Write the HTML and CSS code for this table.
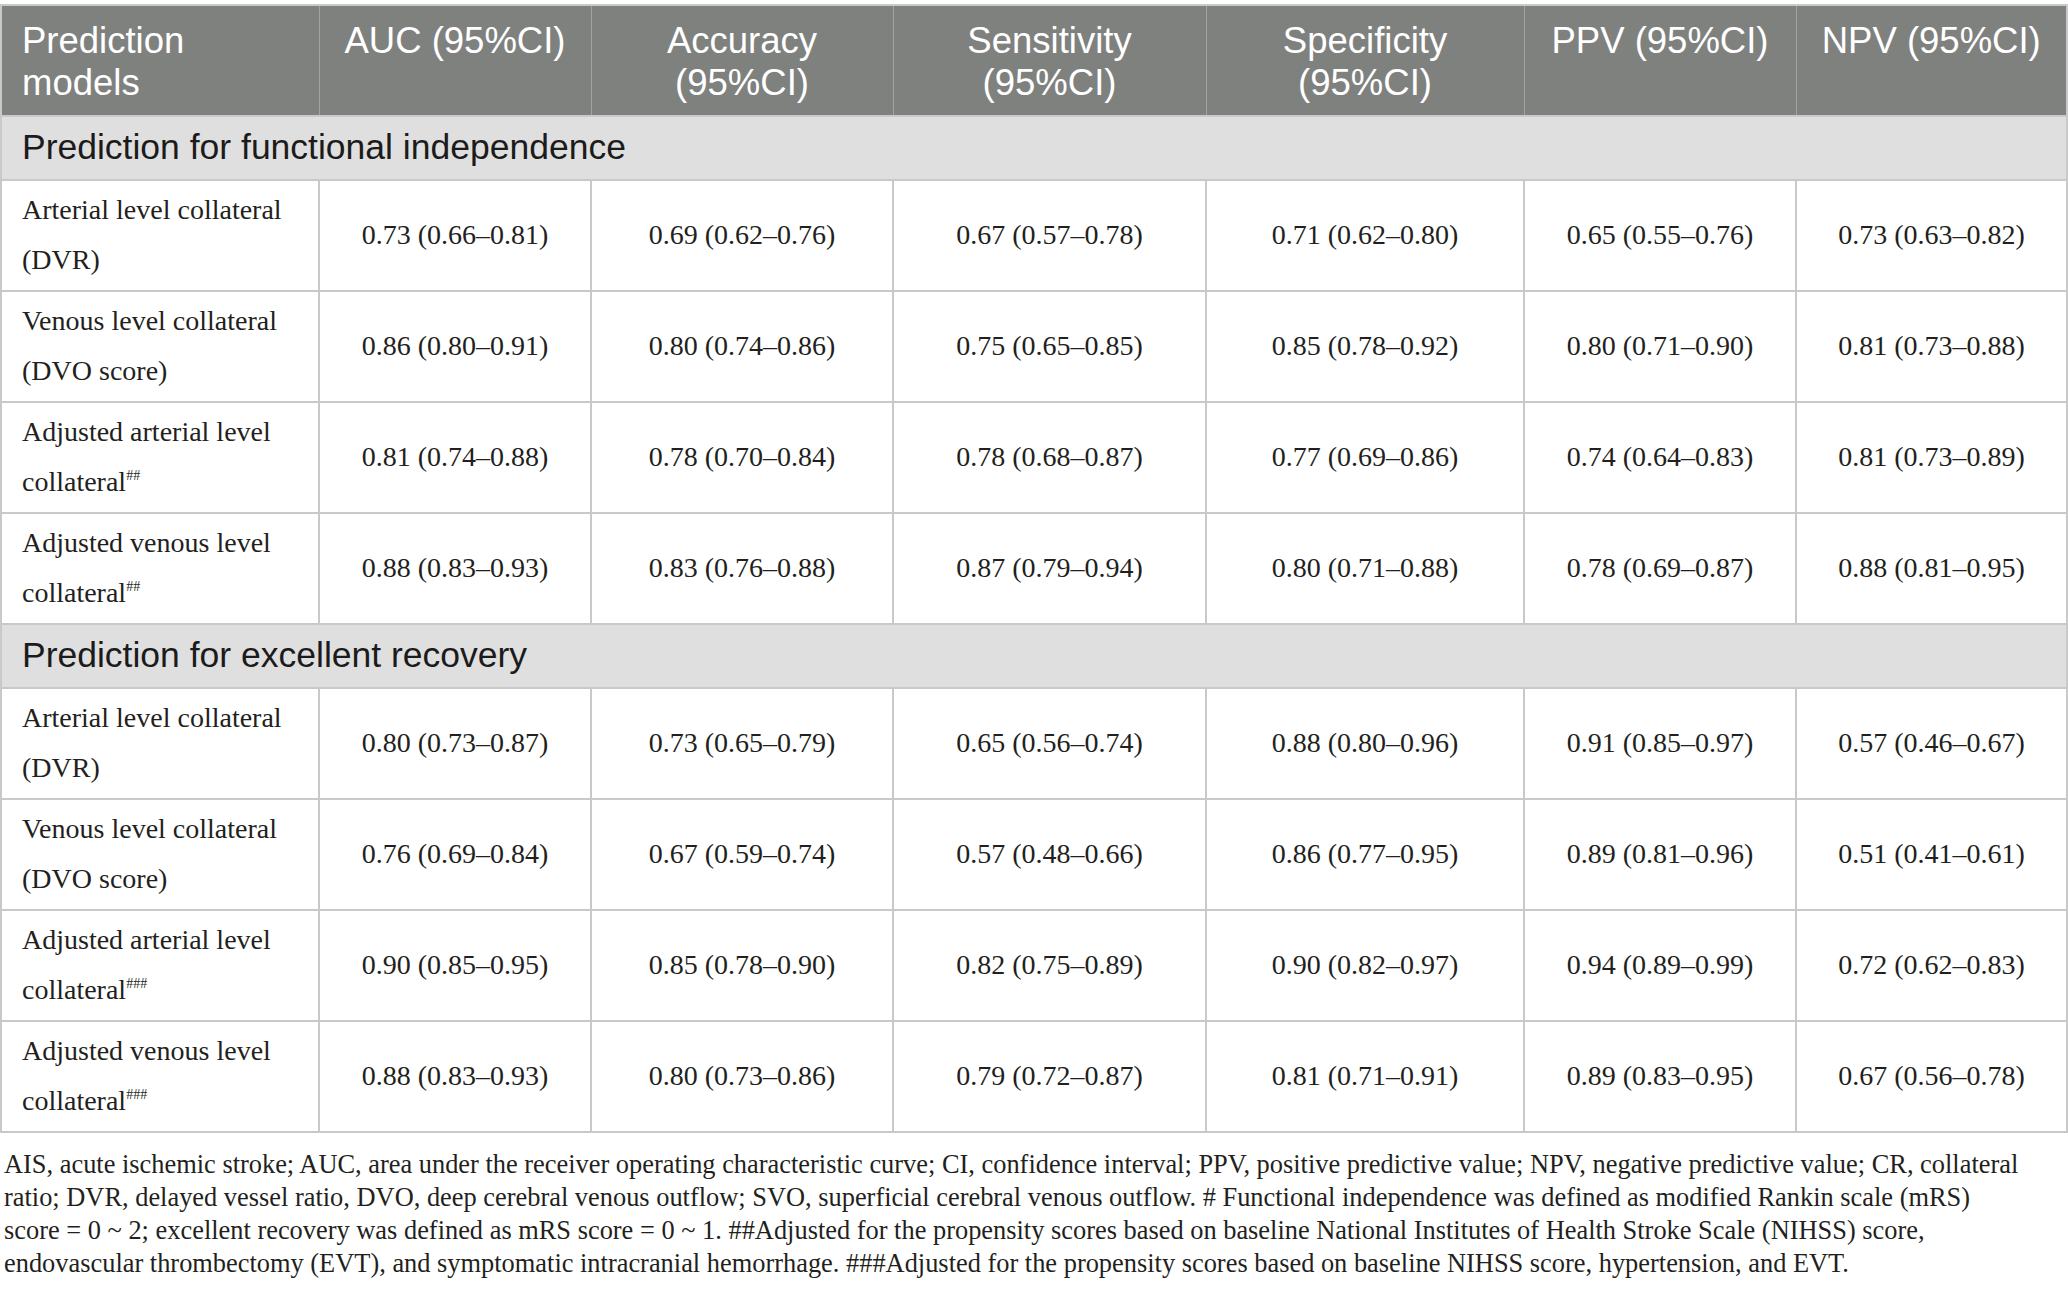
FILE: index.html
```html
<!DOCTYPE html>
<html lang="en">
<head>
<meta charset="utf-8">
<title>Prediction models</title>
<link rel="stylesheet" href="styles.css">
</head>
<body>
<div class="wrap">
<table class="tbl">
  <colgroup>
    <col class="c1"><col class="c2"><col class="c3"><col class="c4"><col class="c5"><col class="c6"><col class="c7">
  </colgroup>
  <thead>
    <tr>
      <th class="left">Prediction<br>models</th>
      <th>AUC (95%CI)</th>
      <th>Accuracy<br>(95%CI)</th>
      <th>Sensitivity<br>(95%CI)</th>
      <th>Specificity<br>(95%CI)</th>
      <th>PPV (95%CI)</th>
      <th>NPV (95%CI)</th>
    </tr>
  </thead>
  <tbody>
    <tr class="section"><td colspan="7">Prediction for functional independence</td></tr>
    <tr>
      <td class="label">Arterial level collateral<br>(DVR)</td>
      <td>0.73 (0.66–0.81)</td><td>0.69 (0.62–0.76)</td><td>0.67 (0.57–0.78)</td><td>0.71 (0.62–0.80)</td><td>0.65 (0.55–0.76)</td><td>0.73 (0.63–0.82)</td>
    </tr>
    <tr>
      <td class="label">Venous level collateral<br>(DVO score)</td>
      <td>0.86 (0.80–0.91)</td><td>0.80 (0.74–0.86)</td><td>0.75 (0.65–0.85)</td><td>0.85 (0.78–0.92)</td><td>0.80 (0.71–0.90)</td><td>0.81 (0.73–0.88)</td>
    </tr>
    <tr>
      <td class="label">Adjusted arterial level<br>collateral<sup>##</sup></td>
      <td>0.81 (0.74–0.88)</td><td>0.78 (0.70–0.84)</td><td>0.78 (0.68–0.87)</td><td>0.77 (0.69–0.86)</td><td>0.74 (0.64–0.83)</td><td>0.81 (0.73–0.89)</td>
    </tr>
    <tr>
      <td class="label">Adjusted venous level<br>collateral<sup>##</sup></td>
      <td>0.88 (0.83–0.93)</td><td>0.83 (0.76–0.88)</td><td>0.87 (0.79–0.94)</td><td>0.80 (0.71–0.88)</td><td>0.78 (0.69–0.87)</td><td>0.88 (0.81–0.95)</td>
    </tr>
    <tr class="section"><td colspan="7">Prediction for excellent recovery</td></tr>
    <tr>
      <td class="label">Arterial level collateral<br>(DVR)</td>
      <td>0.80 (0.73–0.87)</td><td>0.73 (0.65–0.79)</td><td>0.65 (0.56–0.74)</td><td>0.88 (0.80–0.96)</td><td>0.91 (0.85–0.97)</td><td>0.57 (0.46–0.67)</td>
    </tr>
    <tr>
      <td class="label">Venous level collateral<br>(DVO score)</td>
      <td>0.76 (0.69–0.84)</td><td>0.67 (0.59–0.74)</td><td>0.57 (0.48–0.66)</td><td>0.86 (0.77–0.95)</td><td>0.89 (0.81–0.96)</td><td>0.51 (0.41–0.61)</td>
    </tr>
    <tr>
      <td class="label">Adjusted arterial level<br>collateral<sup>###</sup></td>
      <td>0.90 (0.85–0.95)</td><td>0.85 (0.78–0.90)</td><td>0.82 (0.75–0.89)</td><td>0.90 (0.82–0.97)</td><td>0.94 (0.89–0.99)</td><td>0.72 (0.62–0.83)</td>
    </tr>
    <tr>
      <td class="label">Adjusted venous level<br>collateral<sup>###</sup></td>
      <td>0.88 (0.83–0.93)</td><td>0.80 (0.73–0.86)</td><td>0.79 (0.72–0.87)</td><td>0.81 (0.71–0.91)</td><td>0.89 (0.83–0.95)</td><td>0.67 (0.56–0.78)</td>
    </tr>
  </tbody>
</table>
<p class="foot">AIS, acute ischemic stroke; AUC, area under the receiver operating characteristic curve; CI, confidence interval; PPV, positive predictive value; NPV, negative predictive value; CR, collateral ratio; DVR, delayed vessel ratio, DVO, deep cerebral venous outflow; SVO, superficial cerebral venous outflow. # Functional independence was defined as modified Rankin scale (mRS) score&nbsp;=&nbsp;0&nbsp;~&nbsp;2; excellent recovery was defined as mRS score&nbsp;=&nbsp;0&nbsp;~&nbsp;1. ##Adjusted for the propensity scores based on baseline National Institutes of Health Stroke Scale (NIHSS) score, endovascular thrombectomy (EVT), and symptomatic intracranial hemorrhage. ###Adjusted for the propensity scores based on baseline NIHSS score, hypertension, and EVT.</p>
</div>
</body>
</html>
```

FILE: styles.css
```css
html, body {
  margin: 0;
  padding: 0;
  background: #ffffff;
}

.wrap {
  padding-top: 4px;
  width: 2068px;
}

.tbl {
  border-collapse: collapse;
  table-layout: fixed;
  width: 2066px;
  border: 2px solid #c9c9c9;
}

.c1 { width: 318px; }
.c2 { width: 272px; }
.c3 { width: 302px; }
.c4 { width: 313px; }
.c5 { width: 318px; }
.c6 { width: 272px; }
.c7 { width: 271px; }

.tbl th {
  background: #7f817f;
  color: #ffffff;
  font-family: "Liberation Sans", Arial, sans-serif;
  font-weight: 400;
  font-size: 36.5px;
  line-height: 42px;
  text-align: center;
  vertical-align: top;
  padding: 14px 6px 11px;
  border: 1px solid #a3a3a3;
  border-bottom: 2px solid #c9c9c9;
}

.tbl th.left {
  text-align: left;
  padding-left: 20px;
}

.tbl td {
  font-family: "Liberation Serif", "Times New Roman", serif;
  font-size: 28px;
  color: #231f20;
  text-align: center;
  vertical-align: middle;
  border: 2px solid #c9c9c9;
  height: 100px;
  padding: 4px 6px 5px;
  line-height: 50px;
}

.tbl td.label {
  text-align: left;
  padding-left: 20px;
}

.tbl td sup {
  font-size: 14px;
  line-height: 0;
  vertical-align: 11px;
}

.tbl tr.section td {
  background: #e0dfdf;
  font-family: "Liberation Sans", Arial, sans-serif;
  font-size: 35.5px;
  color: #1b1b1b;
  text-align: left;
  line-height: 41px;
  height: 41px;
  padding: 10px 20px 11px;
}

.foot {
  margin: 15px 0 0;
  padding: 0 4px;
  font-family: "Liberation Serif", "Times New Roman", serif;
  font-size: 26.4px;
  line-height: 33px;
  color: #231f20;
}
```
